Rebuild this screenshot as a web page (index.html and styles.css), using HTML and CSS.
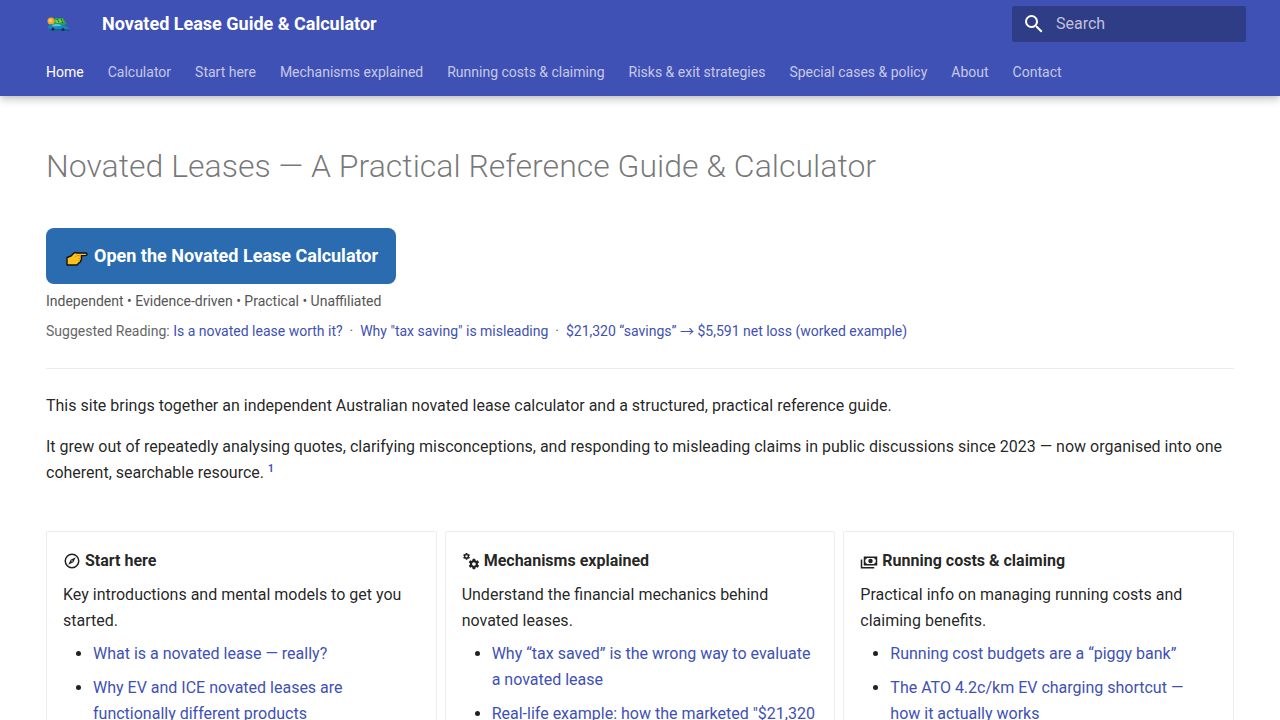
FILE: index.html
```html
<!DOCTYPE html>
<html lang="en">
<head>
  <meta charset="UTF-8">
  <meta name="viewport" content="width=device-width, initial-scale=1.0">
  <title>Novated Lease Guide &amp; Calculator</title>
  <link rel="stylesheet" href="styles.css">
</head>
<body>
  <header class="header">
    <div class="header-top">
      <a class="logo" href="#" aria-label="Novated Lease Guide &amp; Calculator">
        <svg viewBox="0 0 24 16">
          <path d="M6 7 9 2l8 0 4 6-7 2-8-1z" fill="#2f9e44"/>
          <path d="m9 4 7-1 2 3-8 1z" fill="#72d34c"/>
          <path d="m11 3 2 3M15 3l2 4" stroke="#1c6b3a" stroke-width="1"/>
          <circle cx="5" cy="5" r="3.500" fill="#f6a821"/>
          <circle cx="4.500" cy="4.500" r="1.500" fill="#ffd777"/>
          <path d="M2 10q3-2 7-2 5-1 8 1l5 2 1 3-5 1H3z" fill="#1687bd"/>
          <path d="m6 9 3-1h4l3 2-9 .5z" fill="#52c6dc"/>
          <path d="M3 14h20" stroke="#1c3c52" stroke-width="1"/>
          <circle cx="7" cy="13" r="1.500" fill="#16285c"/>
          <circle cx="17" cy="13.500" r="1.500" fill="#16285c"/>
        </svg>
      </a>
      <span class="site-title">Novated Lease Guide &amp; Calculator</span>
      <form class="search">
        <label for="search" aria-label="Search">
          <svg viewBox="0 0 24 24"><path d="M9.500 3A6.500 6.500 0 0 1 16 9.500c0 1.610-.590 3.090-1.560 4.230l.270.270h.790l5 5-1.500 1.500-5-5v-.790l-.270-.270A6.516 6.516 0 0 1 9.500 16 6.500 6.500 0 0 1 3 9.500 6.500 6.500 0 0 1 9.500 3m0 2C7 5 5 7 5 9.500S7 14 9.500 14 14 12 14 9.500 12 5 9.500 5Z"/></svg>
        </label>
        <input id="search" type="text" placeholder="Search">
      </form>
    </div>
    <nav class="tabs">
      <a class="active" href="#">Home</a>
      <a href="#">Calculator</a>
      <a href="#">Start here</a>
      <a href="#">Mechanisms explained</a>
      <a href="#">Running costs &amp; claiming</a>
      <a href="#">Risks &amp; exit strategies</a>
      <a href="#">Special cases &amp; policy</a>
      <a href="#">About</a>
      <a href="#">Contact</a>
    </nav>
  </header>

  <main class="content">
    <h1>Novated Leases — A Practical Reference Guide &amp; Calculator</h1>

    <a class="cta" href="#">
      <svg viewBox="0 0 22 16">
        <path d="M1 7.500 5 6 8 3Q9 2 11 3h8.500q1.500 0 1.500 1.300T19.500 5.600H15q1 1 .3 2.400.7 1.500-.6 2.700 0 1.500-1.500 2L11 15H1z" fill="#fcc21b" stroke="#111" stroke-width="1.400" stroke-linejoin="round"/>
        <path d="m9 7 2-1.400h4M12.500 8.500h2M12 11h2" fill="none" stroke="#d99a12" stroke-width="1"/>
      </svg>
      <span>Open the Novated Lease Calculator</span>
    </a>
    <p class="tagline">Independent • Evidence-driven • Practical • Unaffiliated</p>
    <p class="suggested">Suggested Reading: <a href="#">Is a novated lease worth it?</a> &nbsp;·&nbsp; <a href="#">Why "tax saving" is misleading</a> &nbsp;·&nbsp; <a href="#">$21,320 “savings” → $5,591 net loss (worked example)</a></p>

    <hr>

    <p class="intro">This site brings together an independent Australian novated lease calculator and a structured, practical reference guide.</p>
    <p class="intro">It grew out of repeatedly analysing quotes, clarifying misconceptions, and responding to misleading claims in public discussions since 2023 — now organised into one coherent, searchable resource. <sup><a href="#">1</a></sup></p>

    <div class="cards">
      <section class="card">
        <h2>
          <svg viewBox="0 0 24 24"><path d="m7 17 3.200-6.800L17 7l-3.200 6.800L7 17m5-5.900a.9.9 0 0 0-.9.9.9.9 0 0 0 .9.9.9.9 0 0 0 .9-.9.9.9 0 0 0-.9-.9M12 2a10 10 0 0 1 10 10 10 10 0 0 1-10 10A10 10 0 0 1 2 12 10 10 0 0 1 12 2m0 2a8 8 0 0 0-8 8 8 8 0 0 0 8 8 8 8 0 0 0 8-8 8 8 0 0 0-8-8Z"/></svg>
          Start here
        </h2>
        <p>Key introductions and mental models to get you started.</p>
        <ul>
          <li><a href="#">What is a novated lease — really?</a></li>
          <li><a href="#">Why EV and ICE novated leases are functionally different products</a></li>
        </ul>
      </section>
      <section class="card">
        <h2>
          <svg viewBox="0 0 24 24">
            <defs>
              <path id="cog" d="M15.900 18.450c1.350 0 2.450-1.100 2.450-2.450s-1.100-2.450-2.450-2.450c-1.360 0-2.450 1.100-2.450 2.450s1.090 2.450 2.450 2.450m5.200-1.770 1.480 1.160c.13.11.17.3.08.45l-1.400 2.420a.35.35 0 0 1-.43.15l-1.740-.7c-.36.28-.76.51-1.180.69l-.27 1.850c-.02.17-.17.3-.34.3h-2.800c-.18 0-.32-.13-.35-.3l-.26-1.850c-.43-.18-.82-.41-1.180-.69l-1.750.7c-.15.06-.34 0-.42-.15l-1.400-2.420a.35.35 0 0 1 .08-.45l1.480-1.160-.05-.68.05-.69-1.480-1.150a.35.35 0 0 1-.08-.45l1.400-2.420c.08-.16.27-.22.42-.16l1.750.71c.36-.28.75-.52 1.180-.69l.26-1.860c.03-.16.17-.29.35-.29h2.800c.17 0 .32.13.34.29l.27 1.860c.42.17.82.41 1.180.69l1.740-.71c.17-.06.34 0 .43.16l1.400 2.420c.09.15.05.34-.08.45l-1.480 1.150.05.69z"/>
            </defs>
            <use href="#cog"/>
            <use href="#cog" transform="translate(-4.300 -4.600) scale(.65)"/>
          </svg>
          Mechanisms explained
        </h2>
        <p>Understand the financial mechanics behind novated leases.</p>
        <ul>
          <li><a href="#">Why “tax saved” is the wrong way to evaluate a novated lease</a></li>
          <li><a href="#">Real-life example: how the marketed "$21,320</a></li>
        </ul>
      </section>
      <section class="card">
        <h2>
          <svg viewBox="0 0 24 24"><path d="M5 6h18v12H5V6m9 3a3 3 0 0 1 3 3 3 3 0 0 1-3 3 3 3 0 0 1-3-3 3 3 0 0 1 3-3M9 8a2 2 0 0 1-2 2v4a2 2 0 0 1 2 2h10a2 2 0 0 1 2-2v-4a2 2 0 0 1-2-2H9m-8 2h2v10h16v2H1V10Z"/></svg>
          Running costs &amp; claiming
        </h2>
        <p>Practical info on managing running costs and claiming benefits.</p>
        <ul>
          <li><a href="#">Running cost budgets are a “piggy bank”</a></li>
          <li><a href="#">The ATO 4.2c/km EV charging shortcut — how it actually works</a></li>
        </ul>
      </section>
    </div>
  </main>
</body>
</html>
```

FILE: styles.css
```css
* {
  margin: 0;
  padding: 0;
  box-sizing: border-box;
}

html {
  scrollbar-width: none;
}

body {
  font-family: Roboto, "Noto Sans CJK JP", "Liberation Sans", sans-serif;
  font-size: 16px;
  line-height: 26px;
  color: rgba(0, 0, 0, 0.87);
  background-color: #fff;
}

a {
  color: #4051b5;
  text-decoration: none;
}

.header {
  position: sticky;
  top: 0;
  z-index: 2;
  padding: 0 34px 0 46px;
  background-color: #4051b5;
  color: #fff;
  box-shadow: 0 0 4px rgba(0, 0, 0, 0.1), 0 4px 8px rgba(0, 0, 0, 0.2);
}

.header-top {
  display: flex;
  align-items: center;
  height: 48px;
}

.logo {
  width: 24px;
  height: 16px;
  margin-right: 32px;
}

.logo svg {
  display: block;
}

.site-title {
  flex: 1;
  font-size: 18px;
  font-weight: 700;
}

.search {
  display: flex;
  align-items: center;
  width: 234px;
  height: 36px;
  padding: 0 10px;
  border-radius: 2px;
  background-color: rgba(0, 0, 0, 0.26);
}

.search svg {
  display: block;
  width: 24px;
  height: 24px;
  fill: #fff;
}

.search input {
  flex: 1;
  min-width: 0;
  padding-left: 10px;
  border: none;
  outline: none;
  background: none;
  color: #fff;
  font: inherit;
}

.search input::placeholder {
  color: rgba(255, 255, 255, 0.7);
}

.tabs {
  display: flex;
  gap: 24px;
  height: 48px;
  align-items: center;
  font-size: 14px;
  white-space: nowrap;
}

.tabs a {
  color: rgba(255, 255, 255, 0.7);
}

.tabs .active {
  color: #fff;
}

.content {
  padding: 44px 46px 32px;
}

h1 {
  margin-bottom: 36px;
  font-size: 32px;
  font-weight: 300;
  line-height: 52px;
  color: rgba(0, 0, 0, 0.54);
}

.cta {
  display: inline-flex;
  align-items: center;
  gap: 6px;
  height: 56px;
  padding: 0 18px 0 20px;
  border-radius: 8px;
  background-color: #2b6cb0;
  color: #fff;
  font-size: 18px;
  font-weight: 700;
}

.cta svg {
  width: 22px;
  height: 16px;
  margin-top: 4px;
}

.tagline {
  margin-top: 4px;
  font-size: 14px;
  color: #555;
}

.suggested {
  margin-top: 4px;
  font-size: 14px;
  color: #666;
}

hr {
  margin: 24px 0;
  border: none;
  border-top: 1px solid rgba(0, 0, 0, 0.07);
}

.intro {
  margin-bottom: 15px;
}

sup {
  font-size: 10px;
  font-weight: 700;
  line-height: 1;
}

.cards {
  display: grid;
  grid-template-columns: repeat(3, 1fr);
  gap: 8px;
  margin-top: 45px;
}

.card {
  padding: 16px;
  border: 1px solid rgba(0, 0, 0, 0.07);
  border-radius: 2px;
}

.card h2 {
  display: flex;
  align-items: center;
  gap: 4px;
  margin-bottom: 8px;
  font-size: 16px;
  font-weight: 700;
}

.card h2 svg {
  width: 18px;
  height: 18px;
  fill: currentColor;
}

.card ul {
  margin-top: 7px;
  padding-left: 30px;
}

.card li {
  margin-bottom: 8px;
}
```
